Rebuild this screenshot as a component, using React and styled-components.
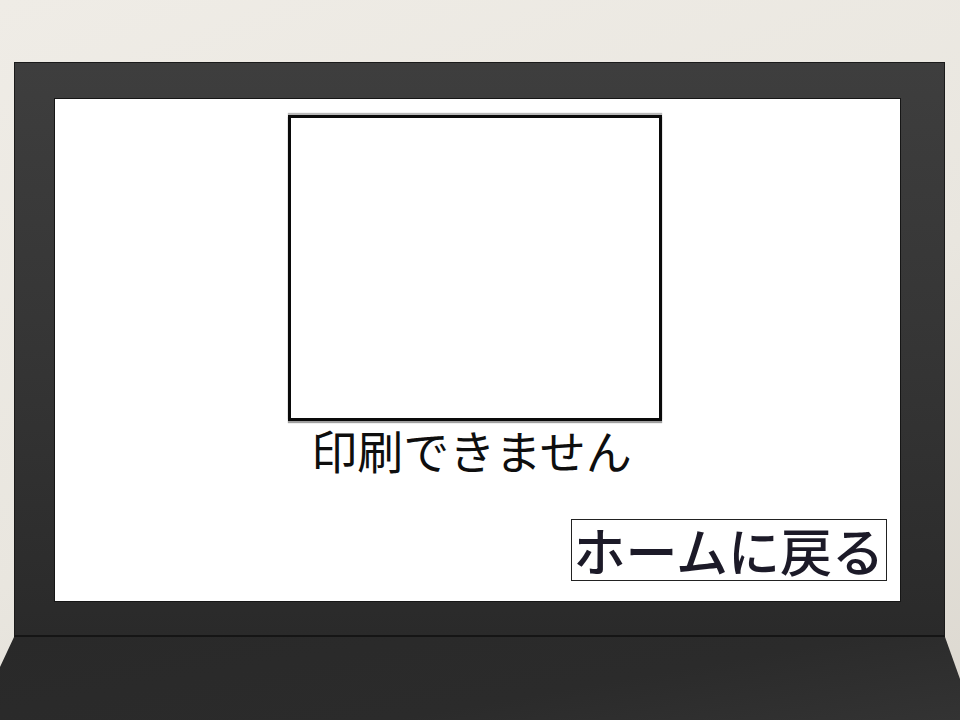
import React from "react";
import styled, { createGlobalStyle } from "styled-components";

const GlobalStyle = createGlobalStyle`
  html, body {
    margin: 0;
    padding: 0;
  }
  body {
    font-family: "Noto Sans CJK JP", "Noto Sans", sans-serif;
  }
`;

const Scene = styled.div`
  width: 960px;
  height: 720px;
  overflow: hidden;
  display: flex;
  flex-direction: column;
  background: linear-gradient(160deg, #efece6 0%, #e9e6df 55%, #dcd8d0 100%);
`;

const Lid = styled.div`
  margin: 62px 15px 0 14px;
  padding: 35px 43px 33px 39px;
  background: linear-gradient(180deg, #3e3e3e 0%, #353535 50%, #2a2a2a 100%);
  border: 1px solid #1b1b1b;
  border-bottom: 2px solid #151515;
`;

const Screen = styled.div`
  height: 504px;
  background: #ffffff;
  border: 1px solid #161616;
  box-sizing: border-box;
  display: flex;
  flex-direction: column;
  align-items: center;
  padding-top: 16px;
`;

const PrintArea = styled.div`
  width: 368px;
  height: 300px;
  margin-right: 6px;
  border: 3px solid #0a0a0a;
  box-shadow: 0 -2px 1px #b8b8b8, 0 2px 1px #a0a0a0;
  background: #fff;
`;

const Caption = styled.div`
  margin-top: 1px;
  margin-right: 12px;
  font-size: 46px;
  font-weight: 400;
  line-height: 54px;
  color: #0e0e0e;
`;

const HomeButton = styled.button`
  margin-top: auto;
  margin-bottom: 20px;
  margin-right: 13px;
  align-self: flex-end;
  font-family: "Noto Sans CJK JP", "Noto Sans", sans-serif;
  font-size: 52px;
  font-weight: 500;
  line-height: 60px;
  padding: 0 2px;
  color: #1c1a28;
  background: #fff;
  border: 1px solid #222;
  cursor: pointer;
`;

const Base = styled.div`
  flex: 1;
  background: linear-gradient(170deg, #292929 0%, #2b2b2b 60%, #333333 100%);
  clip-path: polygon(14px 0, 945px 0, 960px 42px, 960px 100%, 0 100%, 0 30px);
`;

export default function App() {
  return (
    <>
      <GlobalStyle />
      <Scene>
        <Lid>
          <Screen>
            <PrintArea />
            <Caption>印刷できません</Caption>
            <HomeButton type="button">ホームに戻る</HomeButton>
          </Screen>
        </Lid>
        <Base />
      </Scene>
    </>
  );
}
